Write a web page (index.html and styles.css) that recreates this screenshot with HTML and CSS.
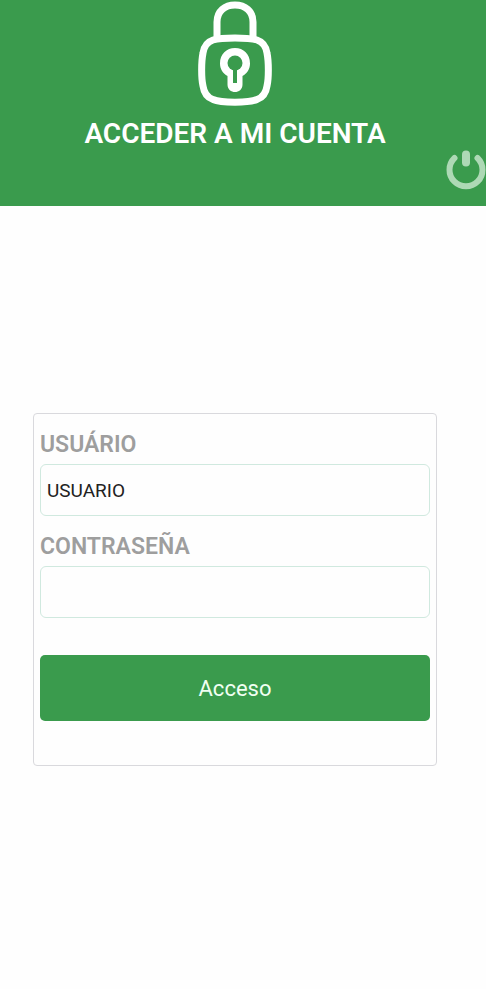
FILE: index.html
```html
<!DOCTYPE html>
<html lang="es">
<head>
<meta charset="utf-8">
<meta name="viewport" content="width=device-width, initial-scale=1">
<title>Acceder a mi cuenta</title>
<link rel="stylesheet" href="styles.css">
</head>
<body>
<header class="header">
  <svg class="lock" viewBox="0 0 76 106" fill="none" stroke="#fff" stroke-width="7" aria-hidden="true">
    <path d="M20 38V22C20 11 28 5 38 5S56 11 56 22V38"/>
    <path d="M38 38C47 38 55 38.500 60 40C66 42 69 46.500 70 53C71.800 62 71.800 78 70 86C69 93 66 97.500 60 99.500C52 103 24 103 16 99.500C10 97.500 7 93 6 86C4.200 78 4.200 62 6 53C7 46.500 10 42 16 40C21 38.500 29 38 38 38Z"/>
    <path d="M30.500 76V84.500C30.500 94.500 45.500 94.500 45.500 84.500V76C50 73.500 53 69 53 63.500C53 54 46.500 48 38 48S23 54 23 63.500C23 69 26 73.500 30.500 76Z" fill="#fff" stroke="none"/>
    <circle cx="38" cy="63" r="7.500" fill="#3a9b4d" stroke="none"/>
    <path d="M38 66V83" stroke="#3a9b4d" stroke-width="4"/>
  </svg>
  <h1 class="title">ACCEDER A MI CUENTA</h1>
  <button class="power" type="button" aria-label="Salir">
    <svg class="power-icon" viewBox="0 0 40 40" fill="none" stroke="#add9b5" stroke-linecap="round" aria-hidden="true">
      <path d="M8.500 8A16.500 16.500 0 1 0 31.500 8" stroke-width="6"/>
      <path d="M20 4.500V12.500" stroke-width="8"/>
    </svg>
  </button>
</header>
<main class="main">
  <form class="card">
    <label class="label" for="user">USUÁRIO</label>
    <input class="field" id="user" type="text" value="USUARIO">
    <label class="label" for="pass">CONTRASEÑA</label>
    <input class="field" id="pass" type="password">
    <button class="submit" type="submit">Acceso</button>
  </form>
</main>
</body>
</html>
```
FILE: styles.css
```css
* {
  box-sizing: border-box;
}

body {
  margin: 0;
  background: #fefefe;
  font-family: Roboto, "Liberation Sans", sans-serif;
}

.header {
  display: flex;
  flex-direction: column;
  align-items: center;
  padding-right: 16px;
  padding-bottom: 16px;
  background: #3a9b4d;
}

.lock {
  width: 76px;
  height: 106px;
}

.title {
  margin: 12px 0 0;
  color: #fff;
  font-size: 28px;
  font-weight: 600;
  line-height: 32px;
}

.power {
  align-self: flex-end;
  margin-right: -16px;
  padding: 0;
  border: 0;
  background: none;
}

.power-icon {
  display: block;
  width: 40px;
  height: 40px;
}

.main {
  padding: 207px 49px 32px 33px;
}

.card {
  display: flex;
  flex-direction: column;
  padding: 16px 6px 44px;
  border: 1px solid #d9d9dd;
  border-radius: 4px;
}

.label {
  margin-bottom: 4px;
  color: #9e9e9e;
  font-size: 23px;
  font-weight: 600;
  line-height: 30px;
}

.field {
  width: 100%;
  height: 52px;
  margin-bottom: 16px;
  padding: 0 6px;
  border: 1px solid #d0e9df;
  border-radius: 6px;
  background: #fefefe;
  color: #222;
  font: 19px Roboto, "Liberation Sans", sans-serif;
}

.submit {
  height: 66px;
  margin-top: 21px;
  border: 0;
  border-radius: 5px;
  background: #3a9b4d;
  color: #f0fff2;
  font: 22px Roboto, "Liberation Sans", sans-serif;
}
```
